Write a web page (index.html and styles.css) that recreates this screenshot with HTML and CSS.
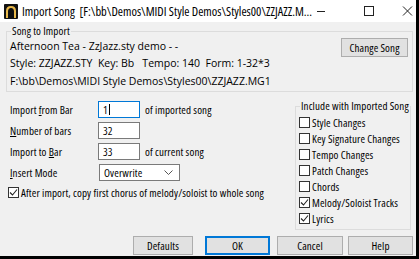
FILE: index.html
```html
<!DOCTYPE html>
<html>
<head>
<meta charset="utf-8">
<link rel="stylesheet" href="styles.css">
</head>
<body>
<div class="window">
  <div class="titlebar">
    <svg class="appicon" width="14" height="15" viewBox="0 0 14 15">
      <rect x="0" y="0" width="14" height="15" rx="1" fill="#111"/>
      <path d="M2 14 V7 Q2 2 7 2 Q12 2 12 7 V14 H10 V7.5 Q10 4 7 4 Q4 4 4 7.5 V14 Z" fill="#e8b84a"/>
      <path d="M5 14 L5.5 9 Q6 7 7 7 Q8 7 8.5 9 L9 14 Z" fill="#111"/>
      <circle cx="7" cy="6" r="1.2" fill="#111"/>
    </svg>
    <span class="title">Import Song&nbsp; [F:\bb\Demos\MIDI Style Demos\Styles00\ZZJAZZ.M...</span>
    <div class="controls">
      <svg class="ctl" width="22" height="22" viewBox="0 0 22 22"><path d="M5 11.5 H13" stroke="#222" stroke-width="1"/></svg>
      <svg class="ctl" width="46" height="22" viewBox="0 0 46 22"><rect x="30.5" y="6.5" width="9" height="9" fill="none" stroke="#222" stroke-width="1"/></svg>
      <svg class="ctl" width="36" height="22" viewBox="0 0 36 22"><path d="M23 6.5 L32 15.5 M32 6.5 L23 15.5" stroke="#222" stroke-width="1"/></svg>
    </div>
  </div>
  <div class="content">
    <fieldset class="group song-group">
      <legend>Song to Import</legend>
      <div class="song-top">
        <div class="song-lines">
          <div class="line">Afternoon Tea - ZzJazz.sty demo - -</div>
          <div class="line pre">Style: ZZJAZZ.STY  Key: Bb   Tempo: 140  Form: 1-32*3</div>
        </div>
        <button class="btn change">Change Song</button>
      </div>
      <div class="line path">F:\bb\Demos\MIDI Style Demos\Styles00\ZZJAZZ.MG1</div>
    </fieldset>

    <div class="middle">
      <div class="left">
        <div class="row">
          <span class="label">Import <u>f</u>rom Bar</span>
          <span class="field focused">1<span class="caret"></span></span>
          <span class="after">of imported song</span>
        </div>
        <div class="row">
          <span class="label"><u>N</u>umber of bars</span>
          <span class="field">32</span>
        </div>
        <div class="row">
          <span class="label">Import to <u>B</u>ar</span>
          <span class="field">33</span>
          <span class="after">of current song</span>
        </div>
        <div class="row">
          <span class="label"><u>I</u>nsert Mode</span>
          <span class="select">Overwrite
            <svg class="chev" width="9" height="6" viewBox="0 0 9 6"><path d="M0.5 0.5 L4.5 4.5 L8.5 0.5" fill="none" stroke="#555" stroke-width="1"/></svg>
          </span>
        </div>
        <div class="check-row wide">
          <span class="box checked"><svg width="9" height="9" viewBox="0 0 9 9"><path d="M1 4.5 L3.5 7 L8 1.5" fill="none" stroke="#222" stroke-width="1.1"/></svg></span>
          <span>After import, copy first chorus of melody/soloist to whole song</span>
        </div>
      </div>

      <fieldset class="group include">
        <legend>Include with Imported Song</legend>
        <div class="check-row"><span class="box"></span><span>Style Changes</span></div>
        <div class="check-row"><span class="box"></span><span>Key Signature Changes</span></div>
        <div class="check-row"><span class="box"></span><span>Tempo Changes</span></div>
        <div class="check-row"><span class="box"></span><span>Patch Changes</span></div>
        <div class="check-row"><span class="box"></span><span>Chords</span></div>
        <div class="check-row"><span class="box checked"><svg width="9" height="9" viewBox="0 0 9 9"><path d="M1 4.5 L3.5 7 L8 1.5" fill="none" stroke="#222" stroke-width="1.1"/></svg></span><span>Melody/Soloist Tracks</span></div>
        <div class="check-row"><span class="box checked"><svg width="9" height="9" viewBox="0 0 9 9"><path d="M1 4.5 L3.5 7 L8 1.5" fill="none" stroke="#222" stroke-width="1.1"/></svg></span><span>Lyrics</span></div>
      </fieldset>
    </div>

    <div class="buttons">
      <button class="btn defaults">Defaults</button>
      <button class="btn ok">OK</button>
      <button class="btn cancel">Cancel</button>
      <button class="btn help">Help</button>
    </div>
  </div>
</div>
</body>
</html>
```

FILE: styles.css
```css
* { box-sizing: border-box; }
html, body {
  margin: 0;
  padding: 0;
  width: 419px;
  height: 259px;
  overflow: hidden;
  background: #000;
}
body {
  font-family: "Open Sans", "Noto Sans", sans-serif;
  font-size: 11px;
  font-stretch: 75%;
  letter-spacing: 0.12px;
  color: #000;
}
.window {
  width: 416px;
  height: 256px;
  background: #f0f0f0;
  display: flex;
  flex-direction: column;
}
.titlebar {
  height: 22px;
  background: #fff;
  display: flex;
  align-items: center;
  flex: none;
}
.appicon {
  margin-left: 4px;
  margin-top: 1px;
  flex: none;
}
.title {
  margin-left: 4px;
  font-size: 12.5px;
  font-stretch: 75%;
  letter-spacing: 0;
  white-space: nowrap;
  flex: 1;
  min-width: 0;
  overflow: hidden;
}
.controls {
  display: flex;
  flex: none;
}
.ctl { display: block; }

.content {
  flex: 1;
  display: flex;
  flex-direction: column;
}
.group {
  margin: 0;
  padding: 0;
  border: 1px solid #dcdcdc;
  min-width: 0;
}
.group legend {
  padding: 0 1px;
  margin-left: 1px;
  line-height: 14px;
  white-space: nowrap;
}
.song-group {
  margin: 2px 3px 0 6px;
  padding: 0 3px 0 3px;
  height: 68px;
}
.song-top {
  display: flex;
  justify-content: space-between;
}
.line {
  height: 17px;
  line-height: 17px;
  white-space: nowrap;
  font-size: 10.5px;
  font-stretch: 100%;
  letter-spacing: 0;
}
.pre { white-space: pre; }
.path { margin-top: 1px; }

.btn {
  font-family: inherit;
  font-size: 11px;
  font-stretch: 75%;
  letter-spacing: 0.12px;
  background: #e1e1e1;
  border: 1px solid #adadad;
  color: #000;
  padding: 0;
  margin: 0;
  height: 19px;
}
.change {
  width: 67px;
  margin-right: 1px;
}

.middle {
  display: flex;
  justify-content: space-between;
}
.left {
  width: 280px;
  flex: none;
  padding-left: 10px;
  padding-top: 9px;
  display: flex;
  flex-direction: column;
  gap: 4px;
}
.row {
  display: flex;
  align-items: center;
  height: 17px;
}
.label {
  width: 88px;
  flex: none;
}
.field {
  width: 42px;
  height: 17px;
  background: #fff;
  border: 1px solid #7a7a7a;
  padding-left: 4px;
  flex: none;
  display: flex;
  align-items: center;
}
.field.focused { border-color: #0078d7; }
.caret {
  width: 1px;
  height: 11px;
  background: #000;
  margin-left: 1px;
}
.after { margin-left: 5px; white-space: nowrap; }
.select {
  width: 81px;
  height: 17px;
  background: #fff;
  border: 1px solid #7a7a7a;
  padding-left: 4px;
  padding-right: 6px;
  display: flex;
  align-items: center;
  justify-content: space-between;
  flex: none;
  margin-left: 1px;
}
.check-row {
  display: flex;
  align-items: center;
  height: 16px;
  white-space: nowrap;
}
.check-row.wide {
  margin-left: -2px;
  margin-top: -1px;
}
.box {
  width: 11px;
  height: 11px;
  border: 1px solid #333;
  background: #fff;
  margin-right: 2px;
  flex: none;
  display: flex;
  align-items: center;
  justify-content: center;
}
.include {
  flex: none;
  width: 116px;
  height: 131px;
  margin: 7px 5px 0 0;
  padding: 1px 3px 0 3px;
}

.buttons {
  display: flex;
  justify-content: flex-end;
  padding-right: 3px;
  margin-top: 6px;
}
.defaults { width: 60px; margin-right: 12px; }
.ok { width: 65px; border: 2px solid #0078d7; margin-right: 7px; }
.cancel { width: 66px; margin-right: 5px; }
.help { width: 65px; }
```
